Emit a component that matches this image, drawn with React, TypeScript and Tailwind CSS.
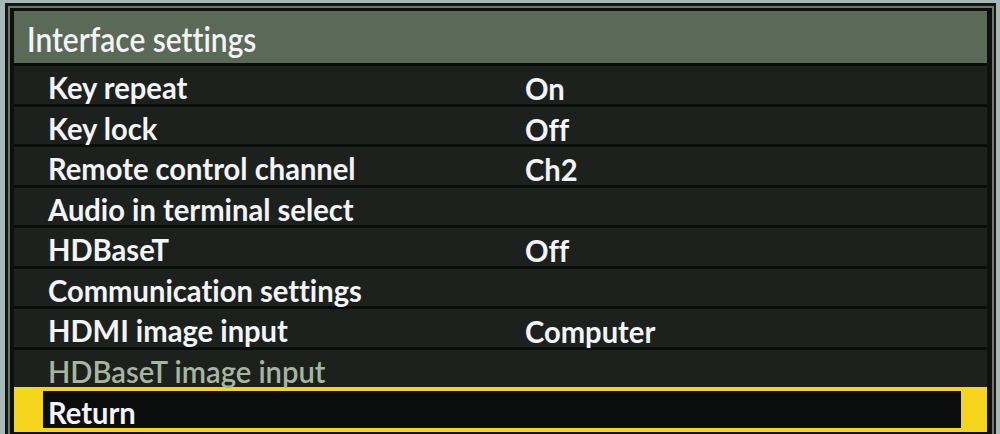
import React from "react";

const rows: { label: string; value?: string; dim?: boolean }[] = [
    { label: "Key repeat", value: "On" },
    { label: "Key lock", value: "Off" },
    { label: "Remote control channel", value: "Ch2" },
    { label: "Audio in terminal select" },
    { label: "HDBaseT", value: "Off" },
    { label: "Communication settings" },
    { label: "HDMI image input", value: "Computer" },
    { label: "HDBaseT image input", dim: true },
];

const txt = "inline-block origin-left scale-x-[0.94] text-[31px] leading-none [font-variant-ligatures:none]";

export default function App() {
    return (
        <div className="w-[1000px] h-[434px] overflow-hidden bg-[#a7b9b7] pt-[3px] pl-[5px] pr-[4px]" style={{ fontFamily: "Lato, 'Liberation Sans', sans-serif" }}>
            <div className="h-[431px] border-t-[3px] border-l-[3px] border-r-[2px] border-[#131715]">
                <div className="h-full border-t-2 border-l-2 border-r-2 border-[#6b7a63] bg-[#0d100f] pt-[3px] pl-[4px] pr-[5px]">
                    {/* header */}
                    <div className="h-[52px] bg-[#5a6a56] pl-[13px] flex items-center">
                        <span className="inline-block origin-left scale-x-[0.88] text-[34px] font-semibold text-[#f3f3f6] leading-none pt-[3px] [font-variant-ligatures:none]">Interface settings</span>
                    </div>

                    {rows.map(r => (
                        <div key={r.label} className="h-[40.5px] border-t-[3px] border-[#0a0c0b] bg-[#1c211e] flex items-center pl-[34px] pt-[8px]">
                            <div className="w-[477px]">
                                <span className={txt + (r.dim ? " font-semibold text-[#a7b6a0]" : " font-bold text-[#f4f3f8]")}>{r.label}</span>
                            </div>
                            {r.value && <span className={txt + " font-bold text-[#f4f3f8]"}>{r.value}</span>}
                        </div>
                    ))}

                    {/* selected row */}
                    <div className="h-[45px] bg-[#f6d61c] pt-[4px] pb-[4px] pl-[29px] pr-[26px]">
                        <div className="h-full bg-[#0b0d0c] pl-[5px] flex items-center pt-[6px]">
                            <span className={txt + " font-bold text-[#f4f3f8]"}>Return</span>
                        </div>
                    </div>
                </div>
            </div>
        </div>
    );
}
